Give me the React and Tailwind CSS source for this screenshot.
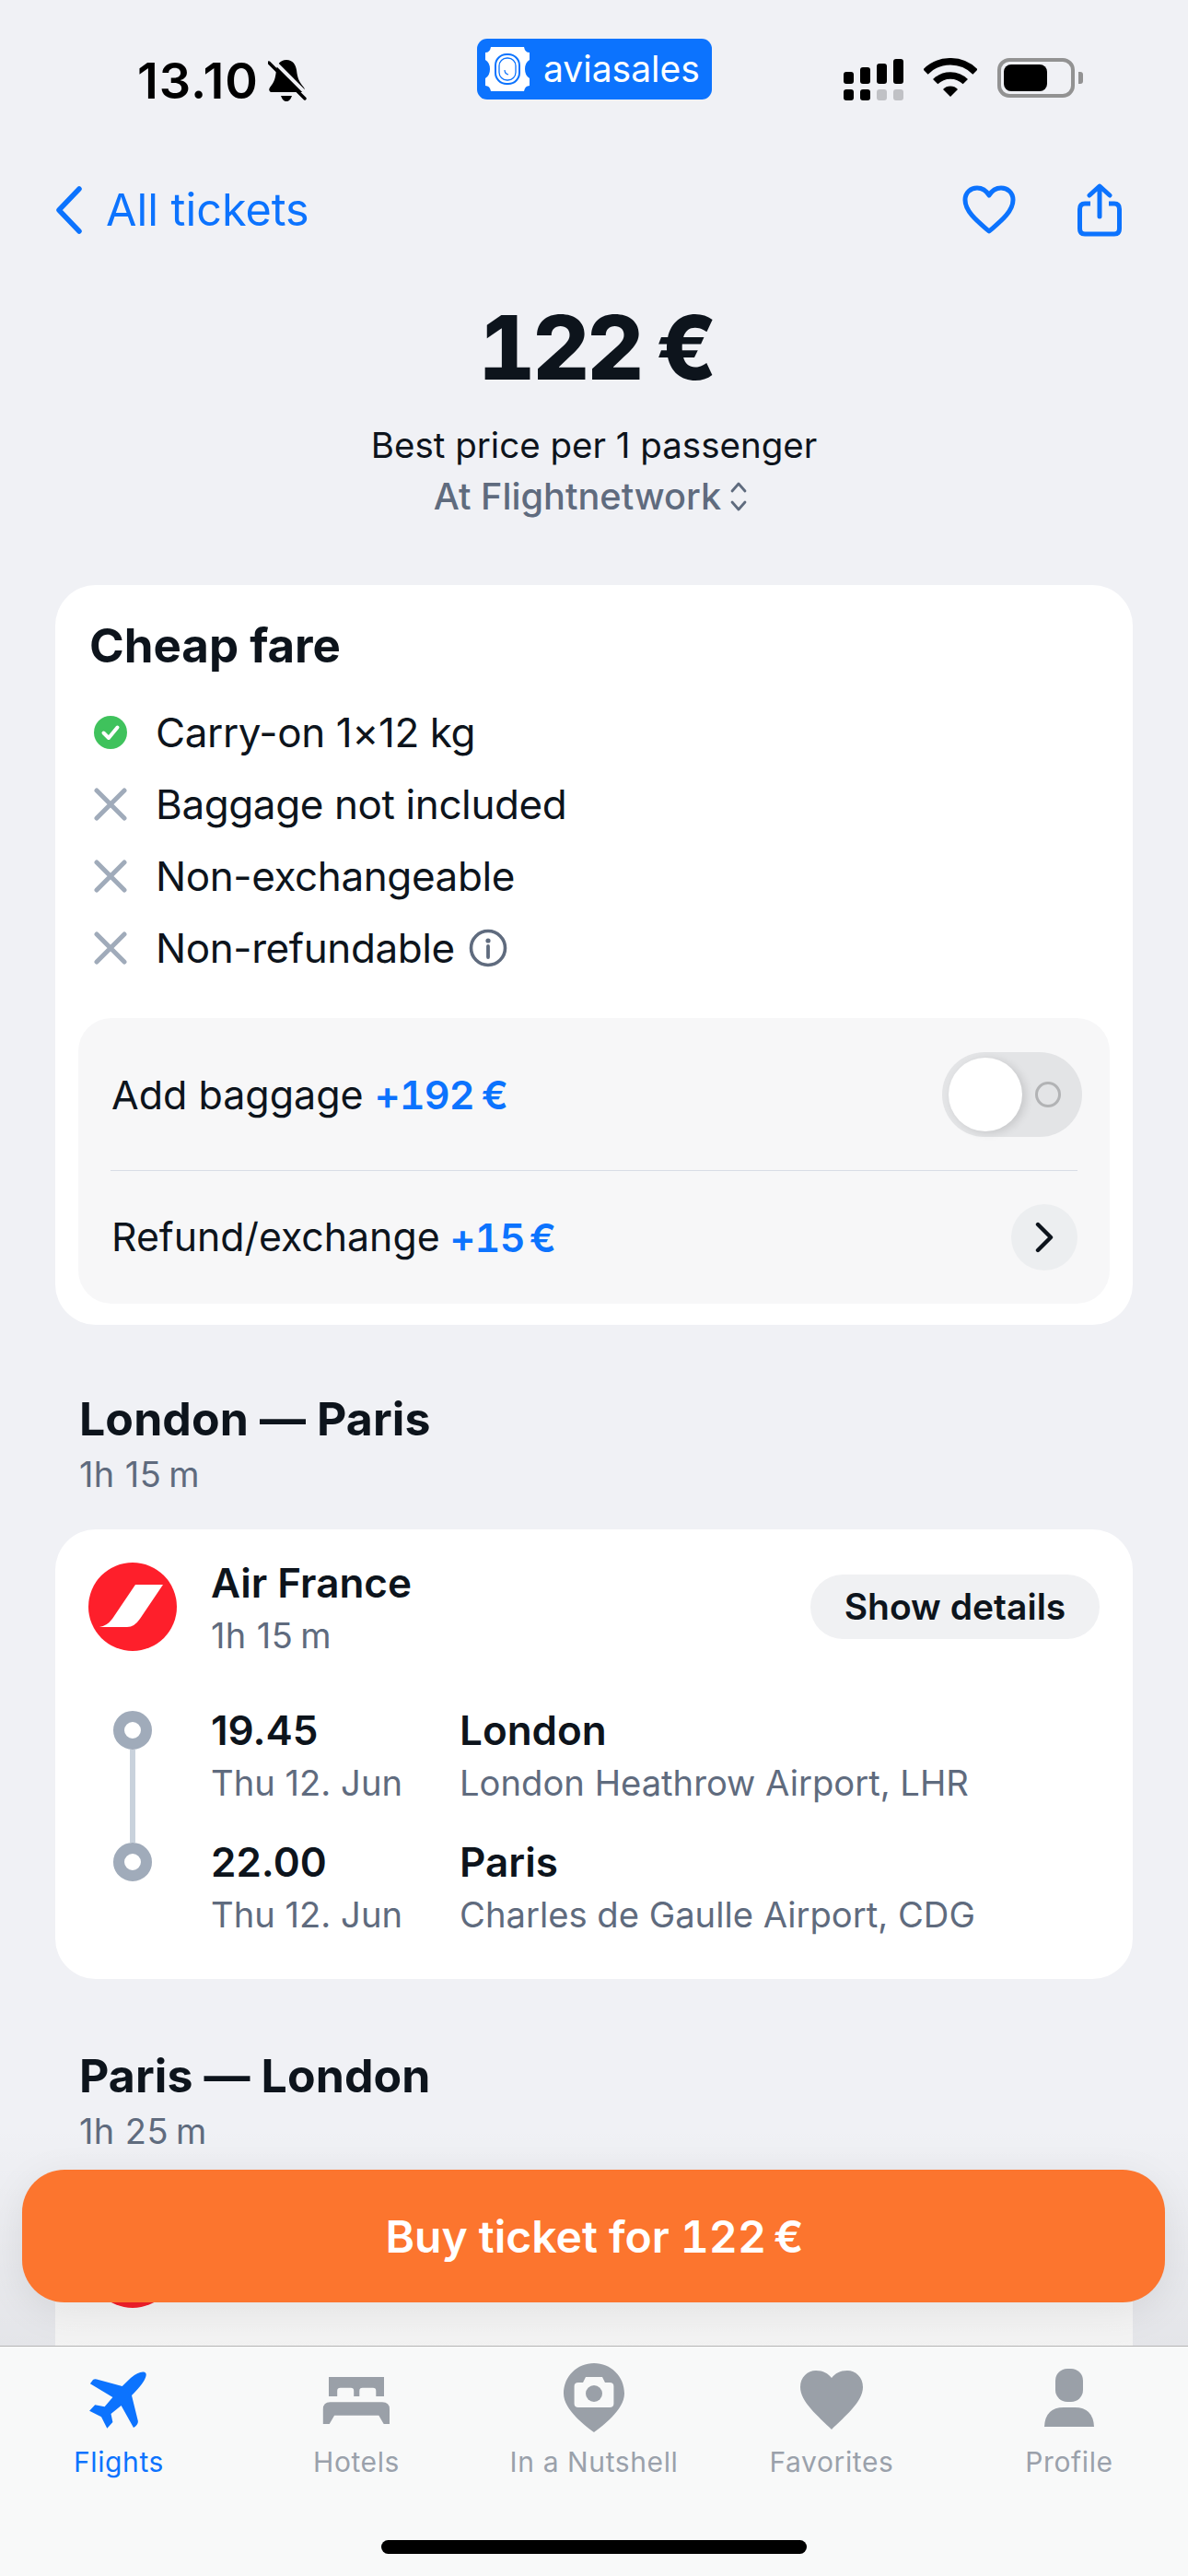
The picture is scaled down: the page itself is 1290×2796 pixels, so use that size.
import React from "react";

const BLUE = "#0c73fe";

function Bell() {
  return (
    <svg viewBox="0 0 42 46" className="w-[42px] h-[46px] ml-[14px] mt-[15px]">
      <path d="M20 0C27 0 30 5 31 11C32 20 34 24 39 30Q41 33 38 35H3Q0 33 2 30C7 24 8 20 9 11C10 5 13 0 20 0Z" fill="#000" />
      <path d="M14 39H26Q24 45 20 45Q16 45 14 39Z" fill="#000" />
      <path d="M5 0L44 39" stroke="#f0f1f5" strokeWidth="4" />
      <path d="M1 3L40 42" stroke="#000" strokeWidth="3.4" strokeLinecap="round" />
    </svg>
  );
}

function Ticket() {
  return (
    <svg viewBox="0 0 48 48" className="w-[48px] h-[48px] shrink-0">
      <path d="M6 0H42Q43 6 48 6V14Q43 17 43 24Q43 31 48 34V42Q43 42 42 48H6Q5 42 0 42V34Q5 31 5 24Q5 17 0 14V6Q5 6 6 0Z" fill="#fff" />
      <rect x="11" y="8" width="26" height="32" rx="12" fill="none" stroke={BLUE} strokeWidth="2" />
      <rect x="15" y="12" width="18" height="24" rx="8.5" fill="none" stroke={BLUE} strokeWidth="1.3" />
      <path d="M21 25Q21 29 25 30" fill="none" stroke={BLUE} strokeWidth="1.2" />
    </svg>
  );
}

function Signal() {
  const tops = ["h-[13px]", "h-[18px]", "h-[22px]", "h-[27px]"];
  return (
    <div className="flex gap-[7px] items-start">
      {tops.map((h, i) => (
        <div key={i} className="flex flex-col items-center w-[11px]">
          <div className="h-[27px] flex items-end">
            <div className={`w-[11px] rounded-[3px] bg-black ${h}`} />
          </div>
          <div className={`w-[11px] h-[12px] mt-[6px] rounded-[3px] ${i < 2 ? "bg-black" : "bg-[#c0c1c5]"}`} />
        </div>
      ))}
    </div>
  );
}

function Wifi() {
  return (
    <svg viewBox="0 0 58 42" className="w-[58px] h-[42px] ml-[22px]">
      <path d="M2 15A38 38 0 0 1 56 15" fill="none" stroke="#000" strokeWidth="7.5" />
      <path d="M12.7 25.7A23 23 0 0 1 45.3 25.7" fill="none" stroke="#000" strokeWidth="7.5" />
      <path d="M29 42L21 34A11 11 0 0 1 37 34Z" fill="#000" />
    </svg>
  );
}

function Battery() {
  return (
    <div className="flex items-center ml-[22px]">
      <div className="w-[84px] h-[43px] rounded-[13px] border-[4px] border-[#929292] p-[3px]">
        <div className="w-[47px] h-[29px] rounded-[8px] bg-black" />
      </div>
      <div className="w-[5px] h-[13px] ml-[4px] rounded-r-[3px] bg-[#929292]" />
    </div>
  );
}

function StatusBar() {
  return (
    <div className="h-[150px] flex items-start pl-[149px]">
      <div className="w-[369px] flex items-start pt-[50px]">
        <span className="w-[128px] text-[54px] leading-[75px] font-semibold text-black whitespace-nowrap tracking-[1px]">13.10</span>
        <Bell />
      </div>
      <div className="w-[255px] h-[66px] mt-[42px] rounded-[11px] bg-[#0c73fe] flex items-center pl-[9px] pr-[10px]">
        <Ticket />
        <span className="ml-[15px] text-[39px] leading-[48px] text-white">aviasales</span>
      </div>
      <div className="ml-[143px] mt-[64px] flex items-start">
        <Signal />
        <div className="-mt-px flex items-start">
          <Wifi />
          <Battery />
        </div>
      </div>
    </div>
  );
}

function Nav() {
  return (
    <div className="mt-[40px] h-[76px] flex items-center pl-[60px] pr-[72px]">
      <svg viewBox="0 0 30 52" className="w-[30px] h-[52px]">
        <path d="M26 3L4 26L26 49" fill="none" stroke={BLUE} strokeWidth="5.5" strokeLinecap="round" strokeLinejoin="round" />
      </svg>
      <span className="ml-[25px] text-[48.5px] leading-[60px] text-[#0c73fe]">All tickets</span>
      <div className="ml-auto flex items-center">
        <svg viewBox="0 0 58 54" className="w-[58px] h-[54px]">
          <path d="M29 50C20 42 3 30 3 16C3 8 9 3 16 3C22 3 26 6 29 11C32 6 36 3 42 3C49 3 55 8 55 16C55 30 38 42 29 50Z" fill="none" stroke={BLUE} strokeWidth="5" strokeLinejoin="round" />
        </svg>
        <svg viewBox="0 0 48 58" className="w-[48px] h-[58px] ml-[67px]">
          <path d="M14 22H8Q2.5 22 2.5 28V49Q2.5 55 8 55H40Q45.5 55 45.5 49V28Q45.5 22 40 22H34" fill="none" stroke={BLUE} strokeWidth="5" />
          <path d="M24 36V4M13 13L24 3L35 13" fill="none" stroke={BLUE} strokeWidth="5" strokeLinecap="round" strokeLinejoin="round" />
        </svg>
      </div>
    </div>
  );
}

function Price() {
  return (
    <div className="flex flex-col items-center">
      <div className="mt-[51px] h-[120px] leading-[120px] text-[96px] font-extrabold text-[#0d141c] flex pl-[8px]">
        <span className="tabular-nums tracking-[-3px]">122</span>
        <span className="ml-[16px] text-[96px]">€</span>
      </div>
      <div className="mt-[20px] text-[38.5px] leading-[52px] text-[#0d141c]">Best price per 1 passenger</div>
      <div className="mt-[2px] flex items-center pr-[7px]">
        <span className="text-[39.7px] leading-[56px] font-medium text-[#5f6b7e]">At Flightnetwork</span>
        <svg viewBox="0 0 20 34" className="w-[20px] h-[34px] ml-[9px]">
          <path d="M3 11L10 3L17 11M3 23L10 31L17 23" fill="none" stroke="#5f6b7e" strokeWidth="2.8" strokeLinecap="round" strokeLinejoin="round" />
        </svg>
      </div>
    </div>
  );
}

function Check() {
  return (
    <svg viewBox="0 0 36 36" className="w-[36px] h-[36px]">
      <circle cx="18" cy="18" r="18" fill="#3fc25c" />
      <path d="M10.5 18.5L16 24L25.5 12.5" fill="none" stroke="#fff" strokeWidth="4" strokeLinecap="round" strokeLinejoin="round" />
    </svg>
  );
}

function Cross() {
  return (
    <svg viewBox="0 0 36 36" className="w-[36px] h-[36px]">
      <path d="M3 3L33 33M33 3L3 33" stroke="#a0abba" strokeWidth="5" strokeLinecap="round" />
    </svg>
  );
}

function Info() {
  return (
    <svg viewBox="0 0 42 42" className="w-[42px] h-[42px] ml-[15px]">
      <circle cx="21" cy="21" r="18.5" fill="none" stroke="#5f6b7e" strokeWidth="3.6" />
      <circle cx="21" cy="13" r="2.6" fill="#5f6b7e" />
      <path d="M21 19V31" stroke="#5f6b7e" strokeWidth="3.8" strokeLinecap="round" />
    </svg>
  );
}

function Feature({ icon, text, extra }) {
  return (
    <div className="h-[78px] flex items-center">
      <div className="w-[36px] ml-[17px] mr-[31px] flex">{icon}</div>
      <span className="text-[44px] leading-[56px] text-[#0d141c] tracking-[-0.4px]">{text}</span>
      {extra}
    </div>
  );
}

function FareCard() {
  return (
    <div className="mt-[68px] mx-[60px] h-[803px] rounded-[44px] bg-white pt-[36px] px-[25px] pb-[24px] flex flex-col">
      <div className="pl-[12px] text-[51px] leading-[60px] font-bold text-[#0d141c]">Cheap fare</div>
      <div className="mt-[25px]">
        <Feature icon={<Check />} text="Carry-on 1×12 kg" />
        <Feature icon={<Cross />} text="Baggage not included" />
        <Feature icon={<Cross />} text="Non-exchangeable" />
        <Feature icon={<Cross />} text="Non-refundable" extra={<Info />} />
      </div>
      <div className="mt-[37px] h-[310px] rounded-[36px] bg-[#f7f7f8]">
        <div className="h-[165px] flex items-center pl-[36px] pr-[30px]">
          <span className="text-[43px] leading-[56px] text-[#0d141c]">Add baggage</span>
          <span className="ml-[12px] text-[43px] leading-[56px] font-semibold text-[#0c73fe] tabular-nums tracking-[-0.8px]">+192<span className="ml-[8px]">€</span></span>
          <div className="ml-auto w-[152px] h-[92px] rounded-full bg-[#e3e4e6] flex items-center pl-[7px]">
            <div className="w-[80px] h-[80px] rounded-full bg-white shadow-[4px_2px_10px_rgba(0,0,0,0.12)]" />
            <div className="ml-[14px] w-[28px] h-[28px] rounded-full border-[3px] border-[#b2b3b5]" />
          </div>
        </div>
        <div className="mx-[35px] h-px bg-[#d9dde6]" />
        <div className="h-[144px] flex items-center pl-[36px] pr-[35px]">
          <span className="text-[42.8px] leading-[56px] text-[#0d141c]">Refund/exchange</span>
          <span className="ml-[11px] text-[43px] leading-[56px] font-semibold text-[#0c73fe] tabular-nums tracking-[-0.8px]">+15<span className="ml-[5px]">€</span></span>
          <div className="ml-auto w-[72px] h-[72px] rounded-full bg-[#eceef0] flex items-center justify-center">
            <svg viewBox="0 0 20 34" className="w-[20px] h-[34px]">
              <path d="M3 3L17 17L3 31" fill="none" stroke="#0d141c" strokeWidth="4.4" strokeLinecap="round" strokeLinejoin="round" />
            </svg>
          </div>
        </div>
      </div>
    </div>
  );
}

function Airline() {
  return (
    <svg viewBox="0 0 96 96" className="w-[96px] h-[96px] shrink-0">
      <circle cx="48" cy="48" r="48" fill="#fe1f2b" />
      <path d="M51 24H81L56 61Q50 70 42 70H12Q20 69 26 61Z" fill="#fff" />
    </svg>
  );
}

function Dot() {
  return <div className="w-[42px] h-[42px] rounded-full border-[12px] border-[#a0abba] bg-white shrink-0" />;
}

function Duration({ h, m, className }) {
  return (
    <div className={`text-[38px] leading-[52px] text-[#5f6b7e] tracking-[0.4px] ${className}`}>
      {h}h {m}<span className="ml-[8px]">m</span>
    </div>
  );
}

function Stop({ time, date, city, airport, className = "" }) {
  return (
    <div className={`grid grid-cols-[270px_1fr] ${className}`}>
      <div>
        <div className="text-[44px] leading-[56px] font-semibold text-[#0d141c]">{time}</div>
        <div className="mt-[3px] text-[38.2px] leading-[52px] text-[#5f6b7e]">{date}</div>
      </div>
      <div>
        <div className="text-[44px] leading-[56px] font-semibold text-[#0d141c]">{city}</div>
        <div className="mt-[3px] text-[38.2px] leading-[52px] text-[#5f6b7e]">{airport}</div>
      </div>
    </div>
  );
}

function SectionHead({ title, h, m, mt }) {
  return (
    <div className={`mx-[86px] ${mt}`}>
      <div className="text-[50px] leading-[60px] font-bold text-[#0d141c] tracking-[0.1px]">{title}</div>
      <Duration h={h} m={m} className="mt-[4px]" />
    </div>
  );
}

function FlightCard() {
  return (
    <div className="mt-[34px] mx-[60px] h-[488px] rounded-[44px] bg-white pt-[30px] px-[36px]">
      <div className="flex items-start">
        <div className="mt-[6px]"><Airline /></div>
        <div className="ml-[37px]">
          <div className="text-[44px] leading-[56px] font-semibold text-[#0d141c]">Air France</div>
          <Duration h="1" m="15" className="mt-[3px]" />
        </div>
        <div className="ml-auto mt-[19px] h-[70px] w-[314px] rounded-full bg-[#f0f1f3] flex items-center justify-center text-[39px] font-semibold text-[#0d141c]">
          Show details
        </div>
      </div>
      <div className="mt-[49px] flex">
        <div className="w-[96px] mr-[37px] flex flex-col items-center pt-[7px]">
          <Dot />
          <div className="w-[6px] h-[101px] bg-[#c9d2dc]" />
          <Dot />
        </div>
        <div className="flex-1">
          <Stop time="19.45" date="Thu 12. Jun" city="London" airport="London Heathrow Airport, LHR" />
          <Stop className="mt-[32px]" time="22.00" date="Thu 12. Jun" city="Paris" airport="Charles de Gaulle Airport, CDG" />
        </div>
      </div>
    </div>
  );
}

function Tab({ label, active, children }) {
  return (
    <div className="flex flex-col items-center">
      <svg viewBox="0 0 100 90" className="w-[100px] h-[90px]" fill={active ? BLUE : "#9aa0a8"}>
        {children}
      </svg>
      <span className={`text-[30px] leading-[36px] tracking-[0.6px] ${active ? "text-[#0c73fe]" : "text-[#9aa1ab]"}`}>{label}</span>
    </div>
  );
}

function TabBar() {
  return (
    <div className="absolute left-0 right-0 bottom-0 h-[250px] border-t border-[#b5b5b5] bg-[#f8f9f9] pt-[17px]">
      <div className="grid grid-cols-5">
        <Tab label="Flights" active>
          <path d="M53.7 26L63 17Q71 10 77 10.5Q80.5 11 79.5 15Q78 22 64 36L70.9 64Q71 68 66 71L52.6 47L41.5 56L43.4 65L37.3 71.7L31 59.3L18.1 52.7L24.2 46.3L34.6 48.3L43.4 38L18.9 23.3L22 19Q23.5 18 26 18.5Z" />
        </Tab>
        <Tab label="Hotels">
          <path fillRule="evenodd" d="M20 16H80V37H71.3V31Q71.3 27.7 68 27.7H56.5Q53.3 27.7 53.3 31V37H47.2V31Q47.2 27.7 44 27.7H32.5Q29.2 27.7 29.2 31V37H20Z" />
          <path d="M13.8 67V51Q13.8 43.3 21.5 43.3H78Q86 43.3 86 51V67H79.7L74.3 57.7H26.1L20.7 67Z" />
        </Tab>
        <Tab label="In a Nutshell">
          <path d="M50 76C42 70 17 52 17 34C17 15 32 1 50 1C68 1 83 15 83 34C83 52 58 70 50 76Z" />
          <path d="M33 22H38L41 16H59L62 22H67Q71.4 22 71.4 26V45Q71.4 49 67 49H33Q28.6 49 28.6 45V26Q28.6 22 33 22Z" fill="#f8f9f9" />
          <circle cx="50" cy="34" r="9" />
        </Tab>
        <Tab label="Favorites">
          <path d="M50 73C36 59 16 43 16 27C16 16 24 9 33 9C41 9 46 12 50 17C54 12 59 9 67 9C76 9 84 16 84 27C84 43 64 59 50 73Z" />
        </Tab>
        <Tab label="Profile">
          <rect x="35" y="7" width="30" height="36" rx="13" />
          <path d="M23 70Q24 49 44 49H56Q76 49 77 70Z" />
        </Tab>
      </div>
      <div className="mt-[67px] mx-auto w-[462px] h-[15px] rounded-full bg-black" />
    </div>
  );
}

export default function App() {
  return (
    <div className="relative w-[1290px] h-[2796px] overflow-hidden bg-[#f0f1f5] font-['Inter',sans-serif]">
      <StatusBar />
      <Nav />
      <Price />
      <FareCard />
      <SectionHead title="London — Paris" h="1" m="15" mt="mt-[72px]" />
      <FlightCard />
      <SectionHead title="Paris — London" h="1" m="25" mt="mt-[75px]" />
      <div className="mt-[34px] mx-[60px] h-[500px] rounded-t-[44px] bg-white pt-[36px] px-[36px]">
        <Airline />
      </div>
      <div className="absolute left-0 right-0 bottom-[250px] h-[240px] bg-gradient-to-b from-transparent to-black/5" />
      <div className="absolute left-[24px] right-[25px] bottom-[297px] h-[144px] rounded-[46px] bg-[#fc752e] shadow-[0_10px_44px_rgba(0,0,0,0.08)] flex items-center justify-center text-[48px] leading-[64px] font-semibold text-white pt-px pl-[2px]">
        <span>Buy ticket for <span className="tabular-nums">122</span><span className="ml-[8px]">€</span></span>
      </div>
      <TabBar />
    </div>
  );
}
